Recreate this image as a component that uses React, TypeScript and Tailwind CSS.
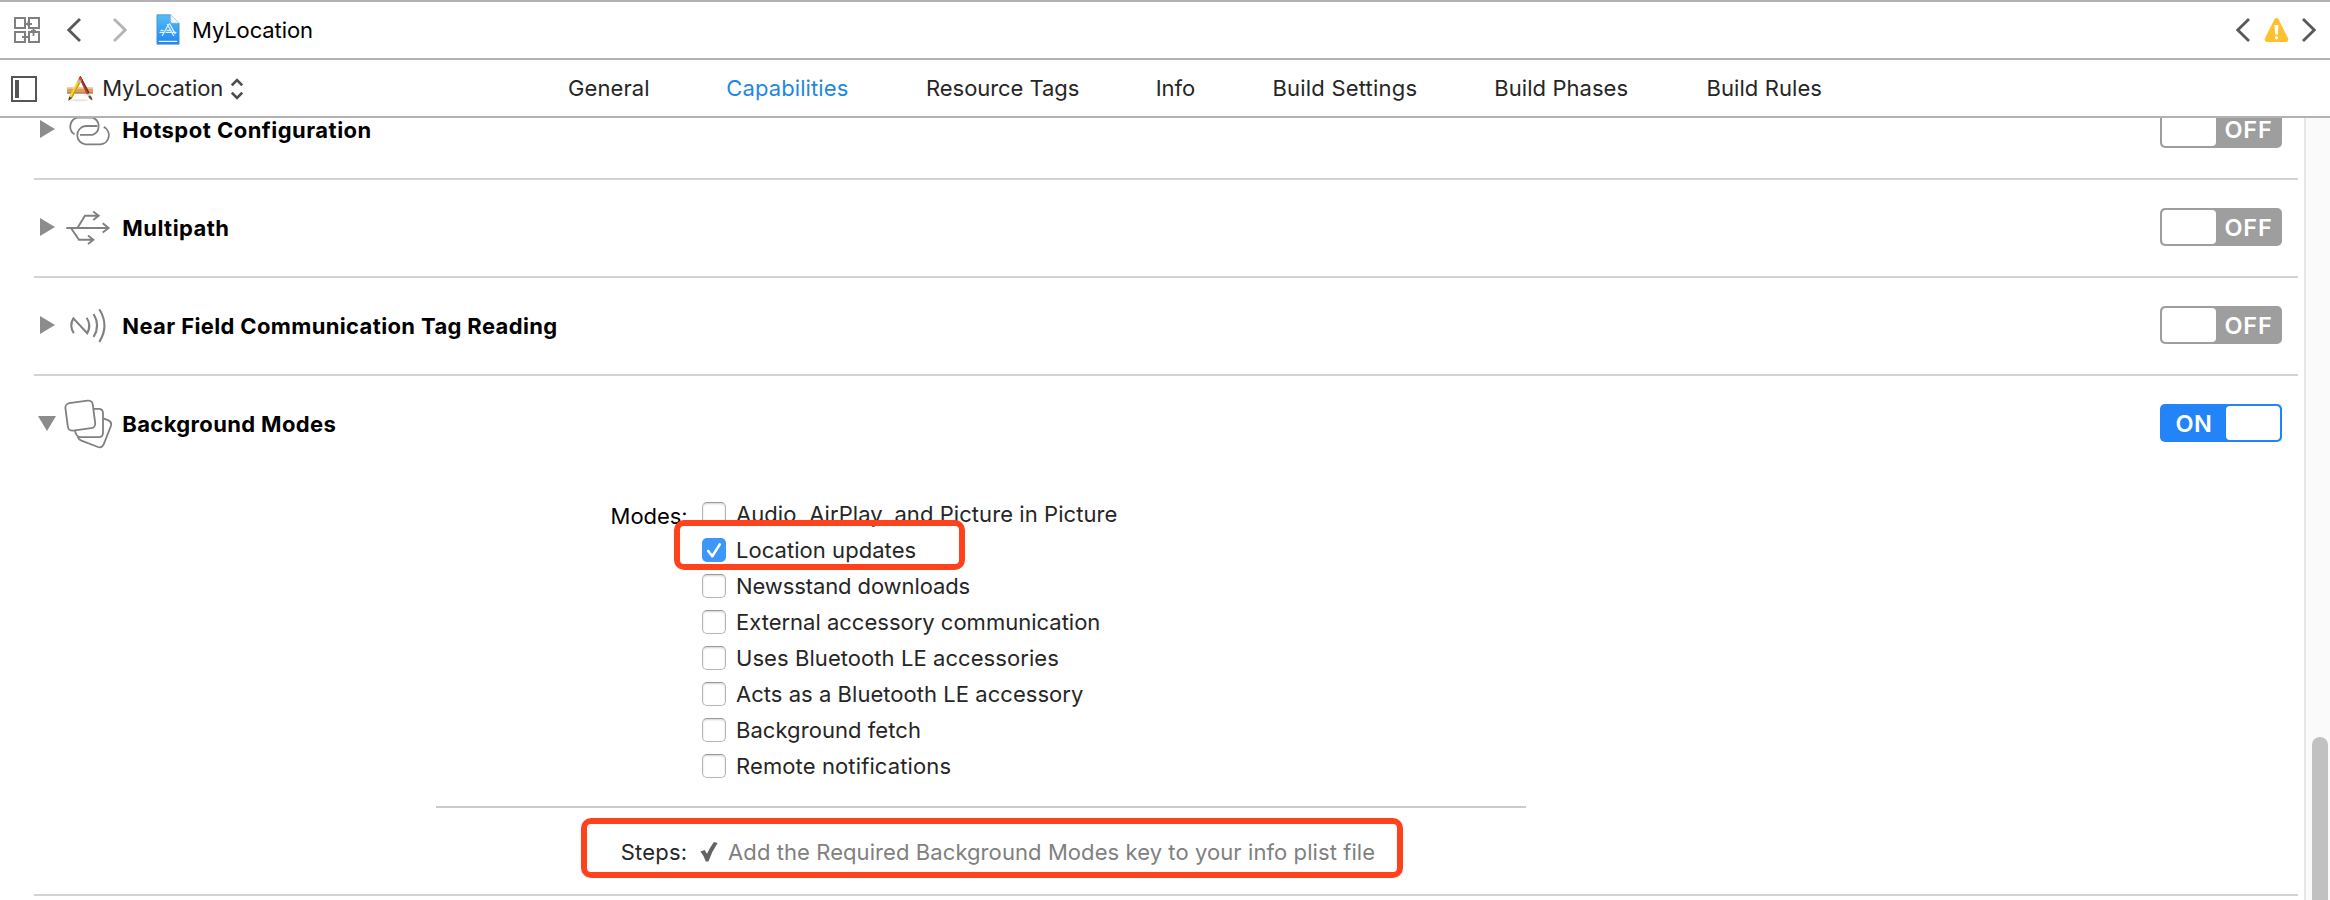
import type { ReactNode } from "react";

const tabs = [
  { label: "General", cls: "w-[158.3px] tracking-[0.1px]" },
  { label: "Capabilities", cls: "w-[199.8px] tracking-[0.1px] text-[#1f87e0]" },
  { label: "Resource Tags", cls: "w-[229.6px] tracking-[-0.07px]" },
  { label: "Info", cls: "w-[116.8px]" },
  { label: "Build Settings", cls: "w-[221.9px] tracking-[0.2px]" },
  { label: "Build Phases", cls: "w-[212.1px] tracking-[0.05px]" },
  { label: "Build Rules", cls: "w-[160px] tracking-[0.08px]" },
];

const modes = [
  { label: "Audio, AirPlay, and Picture in Picture", cls: "tracking-[0.07px]", on: false },
  { label: "Location updates", cls: "tracking-[0.05px]", on: true },
  { label: "Newsstand downloads", cls: "tracking-[-0.1px]", on: false },
  { label: "External accessory communication", cls: "", on: false },
  { label: "Uses Bluetooth LE accessories", cls: "tracking-[0.07px]", on: false },
  { label: "Acts as a Bluetooth LE accessory", cls: "tracking-[0.04px]", on: false },
  { label: "Background fetch", cls: "tracking-[0.06px]", on: false },
  { label: "Remote notifications", cls: "tracking-[0.12px]", on: false },
];

function Chevron({ dir, cls }: { dir: "left" | "right"; cls: string }) {
  return (
    <svg className={`h-6 w-[14px] shrink-0 ${cls}`} viewBox="0 0 14 24" fill="none" stroke="currentColor" strokeWidth="2.8">
      <path d={dir === "left" ? "M13 1 L1.8 12 L13 23" : "M1 1 L12.2 12 L1 23"} />
    </svg>
  );
}

function RelatedItemsIcon() {
  return (
    <svg className="ml-[14px] h-[26px] w-[26px] shrink-0" viewBox="0 0 26 26" fill="none" stroke="#808080" strokeWidth="2">
      <path d="M1 1H11V11H1Z M15 1H25V11H15Z M1 15H11V25H1Z M15 15H25V25H15Z" />
      <path d="M11 7H18 M14.3 4.5V9 M19.5 11V19 M17 14H22 M8 20H15" strokeWidth="1.8" />
    </svg>
  );
}

function ProjectFileIcon() {
  return (
    <svg className="h-[32px] w-[24px] shrink-0" viewBox="0 0 24 32">
      <defs>
        <linearGradient id="doc" x1="0" y1="0" x2="0" y2="1">
          <stop offset="0" stopColor="#55bdf3" />
          <stop offset="1" stopColor="#2087f3" />
        </linearGradient>
      </defs>
      <path d="M.7 1H15L23.3 9.3V30.7H.7Z" fill="#b9bcc0" />
      <path d="M1 .8H14.8L23 9V30H1Z" fill="url(#doc)" stroke="#3b93d6" strokeWidth=".8" />
      <path d="M2.8 26.8H21.2V28H2.8Z" fill="#e8f5ff" />
      <path d="M14.8 .8L23 9H16.2Q14.8 9 14.8 7.6Z" fill="#f4f6f8" stroke="#c2c8ce" strokeWidth=".6" />
      <g fill="none" stroke="#d9f0ff" strokeWidth="1.3" strokeLinecap="round">
        <path d="M12.6 10.5L6.3 21.5M11.3 10.5L17.6 21.5M13.6 9.8L19 19.6M4 18.3H8M10 18.3H20M5 16.3L7 16.3M11 16.3H14" />
      </g>
    </svg>
  );
}

function AppIcon() {
  return (
    <svg className="h-[27px] w-[28px] shrink-0" viewBox="0 0 28 27">
      <ellipse cx="13" cy="25.2" rx="9" ry="1" fill="#e5e5e5" />
      <path d="M1 12.6H27V18.4H1Z" fill="#d9a06a" />
      <path d="M1 12.6H27V14H1Z" fill="#ecc08f" />
      <path d="M1 17.3H27V18.6H1Z" fill="#b87c45" />
      <path d="M12.8 2.4L14.6 1L23.6 18L20.8 19.4Z" fill="#b5432a" />
      <path d="M14.6 1L23.6 18L22.5 18.6L13.6 1.8Z" fill="#7a2c20" />
      <path d="M20.8 19.4L23.6 18L24.6 20.4L22.1 21.5Z" fill="#c9c9c9" />
      <path d="M22.1 21.5L24.6 20.4Q27 23.5 26.4 25.6Q23.4 24.6 22.1 21.5Z" fill="#6b5140" />
      <path d="M12.2 4.3L15.4 5.8L6.2 23L3.1 21.6Z" fill="#f6d52f" />
      <path d="M14 5.2L15.4 5.8L6.2 23L4.9 22.4Z" fill="#cf9912" />
      <path d="M12.2 4.3L15.4 5.8L14.3 8L11 6.5Z" fill="#b8b8b8" />
      <path d="M12.2 4.3Q13.4 1.6 15.2 2.6Q16.8 3.6 15.4 5.8Z" fill="#e8443c" />
      <path d="M3.1 21.6L6.2 23L2.2 26Z" fill="#4a3b2c" />
    </svg>
  );
}

function WarningIcon() {
  return (
    <svg className="ml-[14px] h-[24px] w-[25px] shrink-0" viewBox="0 0 25 24">
      <path d="M10.3 1.4Q12.5 -1.2 14.7 1.4L24.2 20.6Q24.9 23.8 22 24H3Q.1 23.8 .8 20.6Z" fill="#ffc02e" />
      <path d="M10.5 7H14.5L13.8 16.8H11.2Z" fill="#fff" />
      <circle cx="12.5" cy="19.7" r="1.7" fill="#fff" />
    </svg>
  );
}

const glyph = "h-[52px] w-[52px] shrink-0";

function HotspotIcon() {
  return (
    <svg className={glyph} viewBox="62 103 52 52" fill="none" stroke="#808080" strokeWidth="1.8">
      <path d="M97.3 126H85.5A9.2 9.2 0 0 0 85.5 144.3H100.5A9.2 9.2 0 0 0 103.8 126.9" />
      <path d="M80 134.8H92.5A9.1 9.1 0 0 0 92.5 117.6H77.5A9.2 9.2 0 0 0 74.5 134.3" />
    </svg>
  );
}

function MultipathIcon() {
  return (
    <svg className={glyph} viewBox="62 201 52 52" fill="none" stroke="#808080" strokeWidth="1.9">
      <path d="M66.3 228H108.5M102.7 223.2L108.6 228L102.7 232.6" />
      <path d="M77.7 227.5L85 215.8H98.3M93.2 211.6L98.7 215.8L93.2 220" />
      <path d="M71.3 228.5L79 239.8H93M88 235.6L93.4 239.8L88 244" />
    </svg>
  );
}

function NfcIcon() {
  return (
    <svg className={glyph} viewBox="62 299 52 52" fill="none" stroke="#808080" strokeWidth="2.1">
      <path d="M73.8 333.3Q69 325.5 73.4 318.4L87.2 333.3Q91.6 325.5 86.7 317.8" />
      <path d="M93.6 314Q100.6 325.6 93.6 336.9M99.3 309.3Q109.6 325.6 99.3 342" />
    </svg>
  );
}

function LayersIcon() {
  return (
    <svg className={glyph} viewBox="62 397 52 52" fill="none" stroke="#808080" strokeWidth="1.8">
      <rect x="66.5" y="401.7" width="27.6" height="27.8" rx="4.6" transform="rotate(-7.5 80.3 415.6)" />
      <path d="M94 408.8H98.6Q103 408.8 103 413.2V432.8Q103 437.2 98.6 437.2H80.5Q76.5 437.2 75 431" />
      <path d="M103.2 418.3L108 420.2Q112.2 422 110.9 426L103.8 444.2Q102 448.3 98 447L81.4 440.7Q78.6 439.5 77.8 437" />
    </svg>
  );
}

function Toggle({ on }: { on: boolean }) {
  return on ? (
    <div className="mr-4 flex h-[38px] w-[122px] shrink-0 items-center justify-end rounded-[5px] bg-[#2384f8] p-[2px]">
      <span className="flex-1 pt-[2px] pl-[13.5px] text-[23.5px] leading-[20px] font-semibold tracking-[0.4px] text-white">ON</span>
      <div className="h-[34px] w-[54px] rounded-[4px] bg-white" />
    </div>
  ) : (
    <div className="mr-4 flex h-[38px] w-[122px] shrink-0 items-center rounded-[5px] bg-[#9e9e9e] p-[2px]">
      <div className="h-[34px] w-[54px] rounded-[4px] bg-white" />
      <span className="pt-[2px] pl-[8.5px] text-[23.5px] leading-[20px] font-semibold tracking-[0.8px] text-white">OFF</span>
    </div>
  );
}

function CapabilityRow({ icon, title, cls, on = false }: { icon: ReactNode; title: string; cls: string; on?: boolean }) {
  return (
    <div className={`flex h-[98px] shrink-0 items-center border-b-2 pb-[2px] ${on ? "border-transparent" : "border-[#d3d3d3]"}`}>
      <svg className="ml-1 h-[18px] w-[18px] shrink-0" viewBox="0 0 18 18" fill="#8c8c8c">
        {on ? <path d="M0 2H18L9 17Z" /> : <path d="M2 0L17 9L2 18Z" />}
      </svg>
      <div className="ml-[6px] flex">{icon}</div>
      <h2 className={`ml-[8.3px] flex-1 pt-[2px] leading-[20px] font-bold text-black ${cls}`}>{title}</h2>
      <Toggle on={on} />
    </div>
  );
}

function Checkbox({ on }: { on: boolean }) {
  return on ? (
    <div className="flex h-6 w-6 items-center justify-center rounded-[5px] bg-[#3d97f8]">
      <svg className="h-6 w-6" viewBox="0 0 24 24" fill="none" stroke="#fff" strokeWidth="2.6" strokeLinecap="round" strokeLinejoin="round">
        <path d="M6.2 13L10.3 18.2L17.8 6.4" />
      </svg>
    </div>
  ) : (
    <div className="h-6 w-6 rounded-[5px] border border-[#b4b4b4] border-t-[#9a9a9a] bg-white shadow-[inset_0_1px_2px_rgba(0,0,0,0.18)]" />
  );
}

export default function App() {
  return (
    <div className="flex h-[900px] w-[2330px] flex-col overflow-hidden bg-white font-['Inter',sans-serif] text-[22px] leading-[30px] whitespace-nowrap text-[#262626]">
      <header className="flex h-[60px] shrink-0 items-center border-y-2 border-[#b2b2b2]">
        <RelatedItemsIcon />
        <Chevron dir="left" cls="ml-[27px] text-[#595959]" />
        <Chevron dir="right" cls="ml-[32px] text-[#b3b3b3]" />
        <div className="ml-[29px] flex"><ProjectFileIcon /></div>
        <span className="ml-[12px] flex-1 tracking-[-0.1px] text-black">MyLocation</span>
        <Chevron dir="left" cls="text-[#595959]" />
        <WarningIcon />
        <Chevron dir="right" cls="mr-[14px] ml-[13px] text-[#595959]" />
      </header>

      <nav className="flex h-[58px] shrink-0 items-center border-b-2 border-[#b2b2b2]">
        <svg className="mt-[2px] ml-[11px] h-[26px] w-[26px] shrink-0" viewBox="0 0 26 26">
          <rect x="1" y="1" width="24" height="24" fill="none" stroke="#555" strokeWidth="2" />
          <rect x="4" y="4" width="4" height="18" fill="#555" />
        </svg>
        <div className="ml-[29px] flex"><AppIcon /></div>
        <span className="ml-[8.2px] w-[128.8px] tracking-[-0.1px]">MyLocation</span>
        <svg className="mt-[2px] h-[22px] w-[12px] shrink-0" viewBox="0 0 12 22" fill="none" stroke="#4d4d4d" strokeWidth="2.6">
          <path d="M.8 7.4L6 2.2L11.2 7.4M.8 14.6L6 19.8L11.2 14.6" />
        </svg>
        <div className="ml-[325px] flex">
          {tabs.map((t) => (
            <span key={t.label} className={`shrink-0 ${t.cls}`}>{t.label}</span>
          ))}
        </div>
      </nav>

      <div className="flex min-h-0 flex-1 overflow-hidden">
        <main className="-mt-9 ml-[34px] flex h-[818px] w-[2264px] shrink-0 flex-col">
          <CapabilityRow icon={<HotspotIcon />} title="Hotspot Configuration" cls="tracking-[0.48px]" />
          <CapabilityRow icon={<MultipathIcon />} title="Multipath" cls="tracking-[0.45px]" />
          <CapabilityRow icon={<NfcIcon />} title="Near Field Communication Tag Reading" cls="tracking-[0.36px]" />
          <section className="flex h-[520px] shrink-0 flex-col border-b-2 border-[#d3d3d3]">
            <CapabilityRow icon={<LayersIcon />} title="Background Modes" cls="tracking-[0.36px]" on />
            <div className="mt-[22px] flex pl-[576.6px]">
              <span className="mt-[5px] w-[91.4px] tracking-[-0.05px] text-black">Modes:</span>
              <ul>
                {modes.map((m) => (
                  <li key={m.label} className="relative flex h-9 items-center gap-[10px]">
                    <Checkbox on={m.on} />
                    <span className={m.cls}>{m.label}</span>
                    {m.on && (
                      <div className="absolute top-[-12px] left-[-28px] h-[50px] w-[291px] rounded-[10px] border-[6px] border-[#ff421c]" />
                    )}
                  </li>
                ))}
              </ul>
            </div>
            <div className="mt-[22px] ml-[402px] h-[2px] w-[1090px] shrink-0 bg-[#cacaca]" />
            <div className="relative mt-[10px] ml-[546.7px] flex h-[60px] w-[822.5px] shrink-0 items-center pt-2 pl-[40px]">
              <div className="absolute inset-0 rounded-[10px] border-[6px] border-[#ff421c]" />
              <span className="w-[79px] tracking-[0.2px]">Steps:</span>
              <svg className="h-[20px] w-[18px] shrink-0" viewBox="0 0 18 20" fill="#636363">
                <path d="M.4 9.4L4.6 8L7 11.8Q10.4 4.4 14 0L17.6 1Q11.8 9.6 8.4 19.4H5.8Q4 13.6 .4 9.4Z" />
              </svg>
              <span className="ml-[10.4px] tracking-[0.08px] text-[#808080]">
                Add the Required Background Modes key to your info plist file
              </span>
            </div>
          </section>
        </main>
        <aside className="ml-[6px] flex w-[26px] shrink-0 flex-col items-end border-l-2 border-[#e6e6e6] bg-[#fafafa] pr-[2px]">
          <div className="mt-[619px] w-4 flex-1 rounded-t-full bg-[#c1c1c1]" />
        </aside>
      </div>
    </div>
  );
}
